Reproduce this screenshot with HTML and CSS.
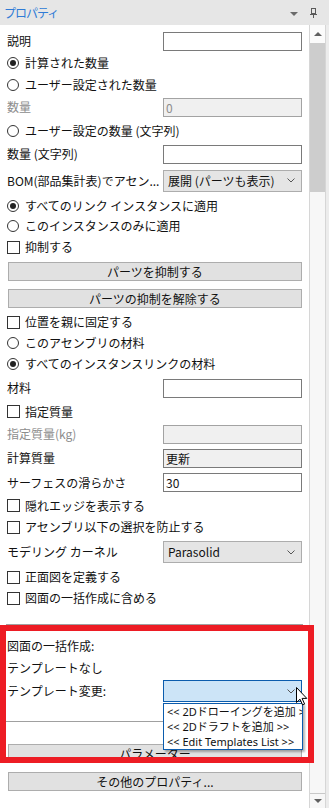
FILE: index.html
```html
<!DOCTYPE html>
<html lang="ja">
<head>
<meta charset="utf-8">
<title>プロパティ</title>
<link rel="stylesheet" href="styles.css">
</head>
<body>
<div class="panel">
  <div class="header">
    <span class="title">プロパティ</span>
    <span class="menu-tri"></span>
    <svg class="pin" width="8" height="10" viewBox="0 0 8 10"><rect x="1.5" y="0.5" width="4" height="5" fill="none" stroke="#5a5a5a"/><line x1="0" y1="6.5" x2="7" y2="6.5" stroke="#5a5a5a"/><line x1="3.5" y1="6.5" x2="3.5" y2="10" stroke="#5a5a5a"/></svg>
  </div>
  <div class="body">
    <div class="content">
      <div class="row h22"><span class="lbl">説明</span><span class="input"></span></div>
      <div class="row h22"><span class="dot on"></span><span>計算された数量</span></div>
      <div class="row h21"><span class="dot"></span><span>ユーザー設定された数量</span></div>
      <div class="row h24"><span class="lbl gray">数量</span><span class="input dis">0</span></div>
      <div class="row h23"><span class="dot"></span><span>ユーザー設定の数量 (文字列)</span></div>
      <div class="row h24"><span class="lbl">数量 (文字列)</span><span class="input"></span></div>
      <div class="row h29"><span class="lbl">BOM(部品集計表)でアセン...</span><span class="select"><span>展開 (パーツも表示)</span><svg class="chev" width="8" height="5" viewBox="0 0 8 5"><polyline points="0.5,0.5 4,4 7.5,0.5" fill="none" stroke="#555"/></svg></span></div>
      <div class="row h21"><span class="dot on"></span><span>すべてのリンク インスタンスに適用</span></div>
      <div class="row h20"><span class="dot"></span><span>このインスタンスのみに適用</span></div>
      <div class="row h22"><span class="box"></span><span>抑制する</span></div>
      <div class="row h27"><span class="btn">パーツを抑制する</span></div>
      <div class="row h27"><span class="btn">パーツの抑制を解除する</span></div>
      <div class="row h20"><span class="box"></span><span>位置を親に固定する</span></div>
      <div class="row h21"><span class="dot"></span><span>このアセンブリの材料</span></div>
      <div class="row h22"><span class="dot on"></span><span>すべてのインスタンスリンクの材料</span></div>
      <div class="row h26"><span class="lbl">材料</span><span class="input"></span></div>
      <div class="row h21"><span class="box"></span><span>指定質量</span></div>
      <div class="row h24"><span class="lbl gray">指定質量(kg)</span><span class="input dis"></span></div>
      <div class="row h24"><span class="lbl">計算質量</span><span class="input ro">更新</span></div>
      <div class="row h25"><span class="lbl">サーフェスの滑らかさ</span><span class="input">30</span></div>
      <div class="row h21"><span class="box"></span><span>隠れエッジを表示する</span></div>
      <div class="row h22"><span class="box"></span><span>アセンブリ以下の選択を防止する</span></div>
      <div class="row h28"><span class="lbl">モデリング カーネル</span><span class="select"><span>Parasolid</span><svg class="chev" width="8" height="5" viewBox="0 0 8 5"><polyline points="0.5,0.5 4,4 7.5,0.5" fill="none" stroke="#555"/></svg></span></div>
      <div class="row h22"><span class="box"></span><span>正面図を定義する</span></div>
      <div class="row h20"><span class="box"></span><span>図面の一括作成に含める</span></div>
      <div class="sep sep1"></div>
      <div class="row h22"><span>図面の一括作成:</span></div>
      <div class="row h22"><span>テンプレートなし</span></div>
      <div class="row h24"><span class="lbl">テンプレート変更:</span><span class="select blue"><span></span><svg class="chev" width="8" height="5" viewBox="0 0 8 5"><polyline points="0.5,0.5 4,4 7.5,0.5" fill="none" stroke="#555"/></svg></span></div>
      <div class="sep sep2"></div>
      <div class="row h27"><span class="btn">パラメーター</span></div>
      <div class="row h28"><span class="btn">その他のプロパティ...</span></div>
    </div>
    <div class="scrollbar">
      <div class="sb-up"><span class="tri-up"></span></div>
      <div class="thumb"></div>
      <div class="track"></div>
      <div class="sb-down"><span class="tri-down"></span></div>
    </div>
    <div class="edge"></div>
  </div>

  <div class="highlight"></div>
  <div class="popup">
    <div class="item">&lt;&lt; 2Dドローイングを追加 &gt;&gt;</div>
    <div class="item">&lt;&lt; 2Dドラフトを追加 &gt;&gt;</div>
    <div class="item">&lt;&lt; Edit Templates List &gt;&gt;</div>
  </div>
  <svg class="cursor" width="12" height="19" viewBox="0 0 12 19"><path d="M0.5,0.5 L0.5,15.5 L4,12.2 L6.6,18 L8.6,17.1 L6.1,11.4 L10.8,11.4 Z" fill="#fff" stroke="#000" stroke-width="1" stroke-linejoin="round"/></svg>
</div>
</body>
</html>
```

FILE: styles.css
```css
* { box-sizing: border-box; }
html, body { margin: 0; padding: 0; }
body {
  width: 329px;
  height: 808px;
  overflow: hidden;
  font-family: "Noto Sans CJK JP", "Noto Sans", sans-serif;
  font-size: 12px;
  color: #111;
  background: #fff;
}
.panel {
  position: relative;
  width: 329px;
  height: 808px;
  display: flex;
  flex-direction: column;
}
.header {
  height: 25px;
  flex: none;
  background: #e6e6e6;
  display: flex;
  align-items: center;
  padding-left: 4px;
}
.title {
  flex: 1;
  color: #2f7bd6;
  font-size: 12px;
  line-height: 25px;
  letter-spacing: -1px;
}
.menu-tri {
  width: 0;
  height: 0;
  border-left: 4px solid transparent;
  border-right: 4px solid transparent;
  border-top: 4px solid #6a6a6a;
  margin-right: 12px;
  margin-top: 2px;
}
.pin { margin-right: 11px; margin-top: 1px; }

.body { flex: 1; display: flex; min-height: 0; }
.content {
  width: 309px;
  flex: none;
  padding: 5px 7px 0 7px;
  display: flex;
  flex-direction: column;
}
.row {
  display: flex;
  align-items: center;
  line-height: 16px;
  white-space: nowrap;
  flex: none;
}
.h20 { height: 20px; }
.h21 { height: 21px; }
.h22 { height: 22px; }
.h23 { height: 23px; }
.h24 { height: 24px; }
.h25 { height: 25px; }
.h26 { height: 26px; }
.h27 { height: 27px; }
.h28 { height: 28px; }
.h29 { height: 29px; }

.lbl {
  width: 156px;
  flex: none;
  overflow: hidden;
  white-space: nowrap;
}
.gray { color: #8d8d8d; }

.input {
  width: 139px;
  height: 19px;
  border: 1px solid #7a7a7a;
  background: #fff;
  padding-left: 2px;
  line-height: 17px;
}
.input.dis { background: #f0f0f0; border-color: #a3a3a3; color: #8d8d8d; }
.input.ro { background: #f0f0f0; }

.select {
  width: 139px;
  height: 22px;
  border: 1px solid #adadad;
  background: #e5e5e5;
  display: flex;
  align-items: center;
  justify-content: space-between;
  padding: 0 6px 0 4px;
}
.select.blue { background: #cce4f7; border-color: #0b5cad; }
.chev { flex: none; }

.dot {
  width: 12px;
  height: 12px;
  border: 1px solid #333;
  border-radius: 50%;
  background: #fff;
  margin-right: 6px;
  display: flex;
  align-items: center;
  justify-content: center;
  flex: none;
}
.dot.on::after {
  content: "";
  width: 6px;
  height: 6px;
  border-radius: 50%;
  background: #222;
}
.box {
  width: 13px;
  height: 13px;
  border: 1px solid #333;
  background: #fff;
  margin-right: 5px;
  flex: none;
}
.btn {
  width: 294px;
  height: 19px;
  margin-left: 1px;
  border: 1px solid #adadad;
  background: #e1e1e1;
  text-align: center;
  line-height: 17px;
}

.sep { flex: none; position: relative; margin-left: -1px; width: 297px; }
.sep::after {
  content: "";
  position: absolute;
  left: 0;
  right: 0;
  height: 1px;
  background: #a0a0a0;
}
.sep1 { height: 27px; }
.sep1::after { top: 16px; }
.sep2 { height: 37px; }
.sep2::after { top: 18px; }

.scrollbar {
  width: 17px;
  flex: none;
  border-left: 1px solid #d6d6d6;
  border-right: 1px solid #d6d6d6;
  background: #f7f7f7;
  display: flex;
  flex-direction: column;
}
.sb-up {
  height: 18px;
  display: flex;
  align-items: center;
  justify-content: center;
  background: #fbfbfb;
}
.tri-up {
  width: 0; height: 0;
  border-left: 4px solid transparent;
  border-right: 4px solid transparent;
  border-bottom: 4px solid #606060;
}
.thumb { height: 149px; background: #cdcdcd; }
.track { flex: 1; }
.sb-down {
  height: 15px;
  border-top: 1px solid #c8c8c8;
  display: flex;
  align-items: center;
  justify-content: center;
}
.tri-down {
  width: 0; height: 0;
  border-left: 4px solid transparent;
  border-right: 4px solid transparent;
  border-top: 4px solid #606060;
}
.edge { flex: 1; background: #ececec; }

.highlight {
  position: absolute;
  left: 0;
  top: 625px;
  width: 314px;
  height: 138px;
  border: 6px solid #ed1c24;
}
.popup {
  position: absolute;
  left: 163px;
  top: 703px;
  width: 140px;
  border: 1px solid #0b5cad;
  background: #fff;
  box-shadow: 2px 2px 2px rgba(0,0,0,0.3);
  overflow: hidden;
  padding-top: 0;
}
.item {
  height: 15px;
  line-height: 15px;
  padding-left: 3px;
  white-space: nowrap;
  overflow: hidden;
  color: #111;
  font-family: "Noto Sans", "Noto Sans CJK JP", sans-serif;
  font-size: 11px;
}
.cursor {
  position: absolute;
  left: 296px;
  top: 687px;
}
```
